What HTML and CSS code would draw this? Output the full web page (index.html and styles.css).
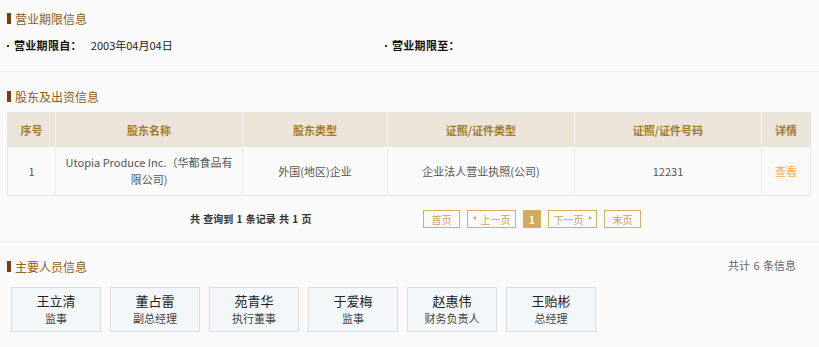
FILE: index.html
```html
<!DOCTYPE html>
<html lang="zh-CN">
<head>
<meta charset="utf-8">
<title>企业信息</title>
<link rel="stylesheet" href="styles.css">
</head>
<body>
<section class="sec sec-first">
  <div class="title"><span class="bar"></span><span>营业期限信息</span></div>
  <div class="kv-row">
    <div class="kv kv-left"><span class="dot"></span><span class="label">营业期限自：</span><span class="value">2003年04月04日</span></div>
    <div class="kv"><span class="dot"></span><span class="label">营业期限至：</span><span class="value"></span></div>
  </div>
</section>

<section class="sec">
  <div class="title"><span class="bar"></span><span>股东及出资信息</span></div>
  <table class="grid">
    <colgroup>
      <col class="c1"><col class="c2"><col class="c3"><col class="c4"><col class="c5"><col class="c6">
    </colgroup>
    <thead>
      <tr><th>序号</th><th>股东名称</th><th>股东类型</th><th>证照/证件类型</th><th>证照/证件号码</th><th>详情</th></tr>
    </thead>
    <tbody>
      <tr>
        <td>1</td>
        <td class="name">Utopia Produce Inc.（华都食品有限公司)</td>
        <td>外国(地区)企业</td>
        <td>企业法人营业执照(公司)</td>
        <td>12231</td>
        <td><a class="link" href="#">查看</a></td>
      </tr>
    </tbody>
  </table>
  <div class="pager">
    <span class="summary">共 查询到 1 条记录 共 1 页</span>
    <div class="pages">
      <span class="pg w37">首页</span>
      <span class="pg w49"><span class="tri tri-l"></span>上一页</span>
      <span class="pg pg-on">1</span>
      <span class="pg w49">下一页<span class="tri tri-r"></span></span>
      <span class="pg w37">末页</span>
    </div>
  </div>
</section>

<section class="sec sec-last">
  <div class="title-row">
    <div class="title"><span class="bar"></span><span>主要人员信息</span></div>
    <span class="count">共计 6 条信息</span>
  </div>
  <div class="people">
    <div class="person"><div class="pname">王立清</div><div class="prole">监事</div></div>
    <div class="person"><div class="pname">董占雷</div><div class="prole">副总经理</div></div>
    <div class="person"><div class="pname">苑青华</div><div class="prole">执行董事</div></div>
    <div class="person"><div class="pname">于爱梅</div><div class="prole">监事</div></div>
    <div class="person"><div class="pname">赵惠伟</div><div class="prole">财务负责人</div></div>
    <div class="person"><div class="pname">王贻彬</div><div class="prole">总经理</div></div>
  </div>
</section>
</body>
</html>
```

FILE: styles.css
```css
html, body {
  margin: 0;
  padding: 0;
  background: #fafafa;
}
body {
  font-family: "Noto Sans CJK SC", "Noto Sans", sans-serif;
  color: #333;
  font-size: 11px;
}
.sec {
  padding: 18px 9px 0 7px;
  border-bottom: 1px solid #ececec;
}
.sec-first {
  padding-top: 12px;
  padding-bottom: 18px;
}
.sec-last {
  border-bottom: none;
}
.title {
  display: flex;
  align-items: center;
  height: 13px;
  line-height: 13px;
  font-size: 12px;
  color: #8f5d20;
}
.bar {
  width: 4px;
  height: 11px;
  background: #7b3f06;
  margin-right: 4px;
}
.kv-row {
  display: flex;
  margin-top: 12px;
  line-height: 16px;
}
.kv {
  display: flex;
  align-items: center;
}
.kv-left {
  width: 378px;
}
.dot {
  width: 2px;
  height: 2px;
  background: #333;
  margin-right: 5px;
  margin-top: 1px;
}
.label {
  font-weight: bold;
  color: #111;
  font-size: 11px;
  letter-spacing: 0.3px;
}
.value {
  margin-left: 9px;
  color: #222;
}
.grid {
  margin-top: 9px;
  width: 803px;
  border-collapse: collapse;
  table-layout: fixed;
  border: 1px solid #e6e6e6;
}
.c1 { width: 48px; }
.c2 { width: 187px; }
.c3 { width: 145px; }
.c4 { width: 187px; }
.c5 { width: 187px; }
.c6 { width: 49px; }
.grid th {
  height: 34px;
  padding: 0;
  background: #ebe4d9;
  color: #a47a2c;
  font-weight: bold;
  font-size: 11px;
  border-left: 1px solid #f6f3ee;
}
.grid td {
  height: 48px;
  padding: 0 10px;
  text-align: center;
  color: #555;
  line-height: 17px;
  border-left: 1px solid #ececec;
  background: #fafafa;
}
.grid td.name {
  padding: 0 6px;
}
.grid th:first-child, .grid td:first-child {
  border-left: none;
}
.link {
  color: #fca955;
  text-decoration: none;
}
.pager {
  display: flex;
  align-items: center;
  height: 45px;
}
.summary {
  margin-left: 183px;
  font-size: 10px;
  font-weight: bold;
  color: #333;
  width: 233px;
  word-spacing: 1px;
}
.pages {
  display: flex;
  gap: 7px;
}
.pg {
  box-sizing: border-box;
  display: flex;
  align-items: center;
  justify-content: center;
  height: 18px;
  border: 1px solid #d6af66;
  color: #cba25a;
  font-size: 10px;
  padding-top: 2px;
}
.w37 { width: 37px; }
.w49 { width: 49px; }
.pg-on {
  width: 18px;
  background: #d3a95c;
  color: #fff;
  font-weight: bold;
}
.tri {
  width: 0;
  height: 0;
  border-top: 2px solid transparent;
  border-bottom: 2px solid transparent;
  margin-top: -3px;
}
.tri-l {
  border-right: 3px solid #cba25a;
  margin-right: 5px;
}
.tri-r {
  border-left: 3px solid #cba25a;
  margin-left: 5px;
}
.title-row {
  display: flex;
  justify-content: space-between;
  align-items: center;
  padding-right: 14px;
}
.count {
  color: #666;
  font-size: 11px;
  margin-top: -4px;
  word-spacing: 1px;
}
.people {
  display: flex;
  gap: 9px;
  margin-top: 14px;
  padding-left: 4px;
  padding-bottom: 20px;
}
.person {
  box-sizing: border-box;
  width: 90px;
  height: 45px;
  border: 1px solid #dcdcdc;
  background: #f4f7f9;
  text-align: center;
  padding-top: 4px;
}
.pname {
  font-size: 13px;
  line-height: 17px;
  color: #222;
}
.prole {
  margin-top: 1px;
  font-size: 11px;
  line-height: 16px;
  color: #444;
}
```
